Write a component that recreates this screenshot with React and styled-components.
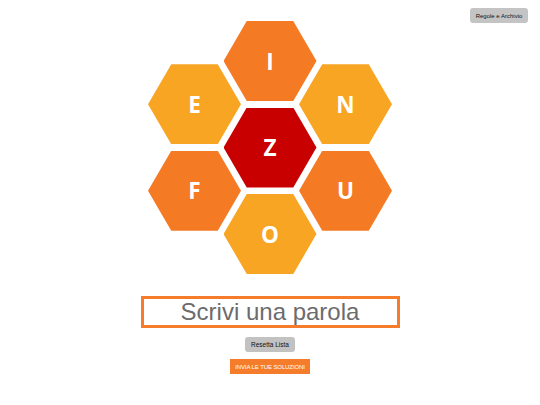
import React from "react";
import styled, { createGlobalStyle } from "styled-components";

const GlobalStyle = createGlobalStyle`
  html, body { margin: 0; padding: 0; background: #ffffff; }
  body { font-family: "Liberation Sans", Arial, sans-serif; }
`;

const Page = styled.div`
  position: relative;
  width: 540px;
  min-height: 405px;
  display: flex;
  flex-direction: column;
  align-items: center;
  padding-top: 21px;
  box-sizing: border-box;
`;

const RulesButton = styled.button`
  position: absolute;
  top: 8px;
  right: 12px;
  width: 58px;
  height: 15px;
  padding: 0;
  border: none;
  border-radius: 3px;
  background: #c4c4c4;
  color: #111;
  font-family: "Liberation Sans", Arial, sans-serif;
  font-size: 6px;
  cursor: pointer;
`;

const Hive = styled.div`
  display: flex;
  flex-direction: row;
  align-items: center;
`;

const Column = styled.div`
  display: flex;
  flex-direction: column;
  gap: 6.5px;
  & + & {
    margin-left: -17.5px;
  }
`;

const Hex = styled.div`
  width: 93px;
  height: 80px;
  clip-path: polygon(25% 0, 75% 0, 100% 50%, 75% 100%, 25% 100%, 0 50%);
  background: ${(p) => p.$color};
  display: flex;
  align-items: center;
  justify-content: center;
  color: #ffffff;
  font-family: "Open Sans", "DejaVu Sans", sans-serif;
  font-weight: 700;
  font-size: 22.5px;
`;

const WordInput = styled.input`
  margin-top: 22px;
  width: 259px;
  height: 32px;
  box-sizing: border-box;
  border: 3px solid #f47c2a;
  outline: none;
  text-align: center;
  font-family: "Liberation Sans", Arial, sans-serif;
  font-size: 24px;
  color: #555;
  padding: 0;
  &::placeholder {
    color: #6c6c6c;
  }
`;

const ResetButton = styled.button`
  margin-top: 9px;
  width: 50px;
  height: 15px;
  padding: 0;
  border: none;
  border-radius: 3px;
  background: #c2c2c2;
  color: #111;
  font-family: "Liberation Sans", Arial, sans-serif;
  font-size: 6.5px;
`;

const SubmitButton = styled.button`
  margin-top: 7px;
  width: 80px;
  height: 15px;
  padding: 0;
  border: none;
  background: #f47c2a;
  color: #fff;
  font-family: "Liberation Sans", Arial, sans-serif;
  font-size: 6px;
  letter-spacing: -0.1px;
`;

const DARK = "#f47a24";
const LIGHT = "#f9a524";
const RED = "#c80000";

export default function App() {
  return (
    <>
      <GlobalStyle />
      <Page>
        <RulesButton>Regole e Archivio</RulesButton>
        <Hive>
          <Column>
            <Hex $color={LIGHT}>E</Hex>
            <Hex $color={DARK}>F</Hex>
          </Column>
          <Column>
            <Hex $color={DARK}>I</Hex>
            <Hex $color={RED}>Z</Hex>
            <Hex $color={LIGHT}>O</Hex>
          </Column>
          <Column>
            <Hex $color={LIGHT}>N</Hex>
            <Hex $color={DARK}>U</Hex>
          </Column>
        </Hive>
        <WordInput placeholder="Scrivi una parola" />
        <ResetButton>Resetta Lista</ResetButton>
        <SubmitButton>INVIA LE TUE SOLUZIONI</SubmitButton>
      </Page>
    </>
  );
}
